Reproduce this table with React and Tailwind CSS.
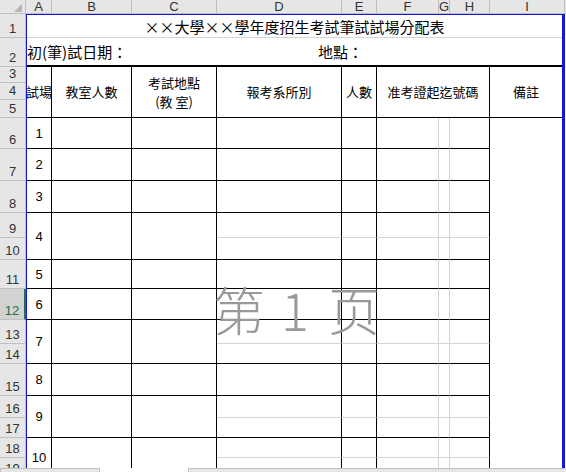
import React from 'react';

const CJK = "font-['Noto_Sans_CJK_TC','Noto_Sans_CJK_SC',sans-serif]";
const LAT = "font-['Liberation_Sans',Arial,sans-serif]";

const colHeads = [
  ['A', 'w-[26px]'],
  ['B', 'w-[80px]'],
  ['C', 'w-[85px]'],
  ['D', 'w-[125px]'],
  ['E', 'w-[35px]'],
  ['F', 'w-[62px]'],
  ['G', 'w-[11px]'],
  ['H', 'w-[40px]'],
  ['I', 'w-[75px]'],
];

const rowHeads = [
  ['1', 'h-[24px]'],
  ['2', 'h-[29px]'],
  ['3', 'h-[16px]'],
  ['4', 'h-[17px]'],
  ['5', 'h-[18px]'],
  ['6', 'h-[31px]'],
  ['7', 'h-[32px]'],
  ['8', 'h-[32px]'],
  ['9', 'h-[25px]'],
  ['10', 'h-[22px]'],
  ['11', 'h-[29px]'],
  ['12', 'h-[31px]'],
  ['13', 'h-[24px]'],
  ['14', 'h-[20px]'],
  ['15', 'h-[32px]'],
  ['16', 'h-[22px]'],
  ['17', 'h-[20px]'],
  ['18', 'h-[20px]'],
  ['19', 'h-[20px]'],
];

const groups = [
  [1, 1],
  [2, 1],
  [3, 1],
  [4, 2],
  [5, 1],
  [6, 1],
  [7, 2],
  [8, 1],
  [9, 2],
  [10, 2],
];

function X() {
  return <span className="inline-block w-[15px] text-center">×</span>;
}

function dataCells() {
  const out = [];
  groups.forEach(([n, span], gi) => {
    const rs = span === 2 ? 'row-span-2' : '';
    out.push(
      <div
        key={`a${n}`}
        className={`${rs} border-r border-b border-black flex items-center justify-center text-[13px] leading-none text-black ${LAT}`}
      >
        {n}
      </div>
    );
    out.push(<div key={`b${n}`} className={`${rs} border-r border-b border-black`} />);
    out.push(<div key={`c${n}`} className={`${rs} border-r border-b border-black`} />);
    for (let i = 0; i < span; i++) {
      const last = i === span - 1;
      const bb = last ? 'border-b-black' : 'border-b-[#d4d4d4]';
      out.push(<div key={`d${n}${i}`} className={`border-r border-b border-r-black ${bb}`} />);
      out.push(<div key={`e${n}${i}`} className={`border-r border-b border-r-black ${bb}`} />);
      out.push(<div key={`f${n}${i}`} className={`border-r border-b border-r-[#d4d4d4] ${bb}`} />);
      out.push(<div key={`g${n}${i}`} className={`border-r border-b border-r-[#d4d4d4] ${bb}`} />);
      out.push(<div key={`h${n}${i}`} className={`border-r border-b border-r-black ${bb}`} />);
      if (gi === 0 && i === 0) out.push(<div key="iData" className="row-span-14" />);
    }
  });
  return out;
}

const hdrCell = `row-span-3 border-r border-b border-black flex items-center justify-center overflow-hidden whitespace-nowrap text-[13px] text-black ${CJK}`;

export default function App() {
  return (
    <div className="relative w-[566px] h-[472px] overflow-hidden bg-white flex flex-col">
      {/* column headers */}
      <div className={`flex h-[14px] shrink-0 bg-[#e6e6e6] ${LAT}`}>
        <div className="w-[26px] h-full border-r border-b border-[#c0c0c0] flex items-end justify-end pr-[3px] pb-[1px]">
          <svg width="8" height="8" viewBox="0 0 8 8">
            <polygon points="8,0 8,8 0,8" fill="#b4b4b4" />
          </svg>
        </div>
        {colHeads.map(([l, w]) => (
          <div
            key={l}
            className={`${w} h-full shrink-0 border-r border-b border-[#c0c0c0] flex items-center justify-center text-[13px] leading-none text-[#333]`}
          >
            {l}
          </div>
        ))}
        <div className="flex-1 h-full border-b border-[#c0c0c0]" />
      </div>

      {/* body */}
      <div className="flex flex-1 min-h-0 overflow-hidden">
        <div className={`w-[26px] shrink-0 flex flex-col bg-[#e6e6e6] ${LAT}`}>
          {rowHeads.map(([l, h]) =>
            l === '12' ? (
              <div
                key={l}
                className={`${h} shrink-0 border-b border-b-[#c0c0c0] border-r-2 border-r-[#217346] bg-[#d2d2d2] flex items-end justify-center pb-[1px] text-[13px] leading-[15px] text-[#217346]`}
              >
                {l}
              </div>
            ) : (
              <div
                key={l}
                className={`${h} shrink-0 border-b border-r border-[#c0c0c0] flex items-end justify-center pb-[1px] text-[13px] leading-[15px] text-[#333]`}
              >
                {l}
              </div>
            )
          )}
        </div>

        <div className="shrink-0 self-start border-l border-t border-r-[3px] border-[#1616d8]">
          <div className="grid grid-cols-[25px_80px_85px_125px_35px_62px_11px_40px_72px] grid-rows-[23px_29px_16px_17px_18px_31px_32px_32px_25px_22px_29px_31px_24px_20px_32px_22px_20px_20px_20px]">
            {/* row 1 */}
            <div className={`col-span-9 border-b border-[#d4d4d4] flex items-center justify-center text-[15px] leading-none text-black whitespace-nowrap ${CJK}`}>
              <X />
              <X />
              大學
              <X />
              <X />
              學年度招生考試筆試試場分配表
            </div>
            {/* row 2 */}
            <div className={`col-span-9 border-b-2 border-black flex items-center text-[15px] leading-none text-black whitespace-nowrap ${CJK}`}>
              <span className="w-[291px] shrink-0">初(筆)試日期：</span>
              <span>地點：</span>
            </div>
            {/* header rows 3-5 */}
            <div className={hdrCell}>試場</div>
            <div className={hdrCell}>教室人數</div>
            <div className={`${hdrCell} flex-col leading-[19px]`}>
              <span>考試地點</span>
              <span>(教 室)</span>
            </div>
            <div className={hdrCell}>報考系所別</div>
            <div className={hdrCell}>人數</div>
            <div className={`${hdrCell} col-span-3`}>准考證起迄號碼</div>
            <div className={`row-span-3 border-b border-black flex items-center justify-center text-[13px] text-black ${CJK}`}>
              備註
            </div>
            {dataCells()}
          </div>
        </div>
        <div className="flex-1" />
      </div>

      {/* bottom strip */}
      <div className="h-[4px] shrink-0 flex">
        <div className="w-[100px] bg-[#e6e6e6] border-t border-l border-r border-[#c0c0c0]" />
        <div className="w-[88px] bg-white" />
        <div className="flex-1 bg-[#e6e6e6] border-t border-l border-[#c0c0c0]" />
      </div>

      {/* page watermark */}
      <div className="absolute left-[213px] top-[283px] flex items-baseline text-[52px] leading-none font-light text-[#999999] whitespace-nowrap font-['Noto_Sans_CJK_SC',sans-serif] pointer-events-none">
        <span>第</span>
        <span className="ml-[16px] w-[28px] text-center">1</span>
        <span className="ml-[19px]">页</span>
      </div>
    </div>
  );
}
